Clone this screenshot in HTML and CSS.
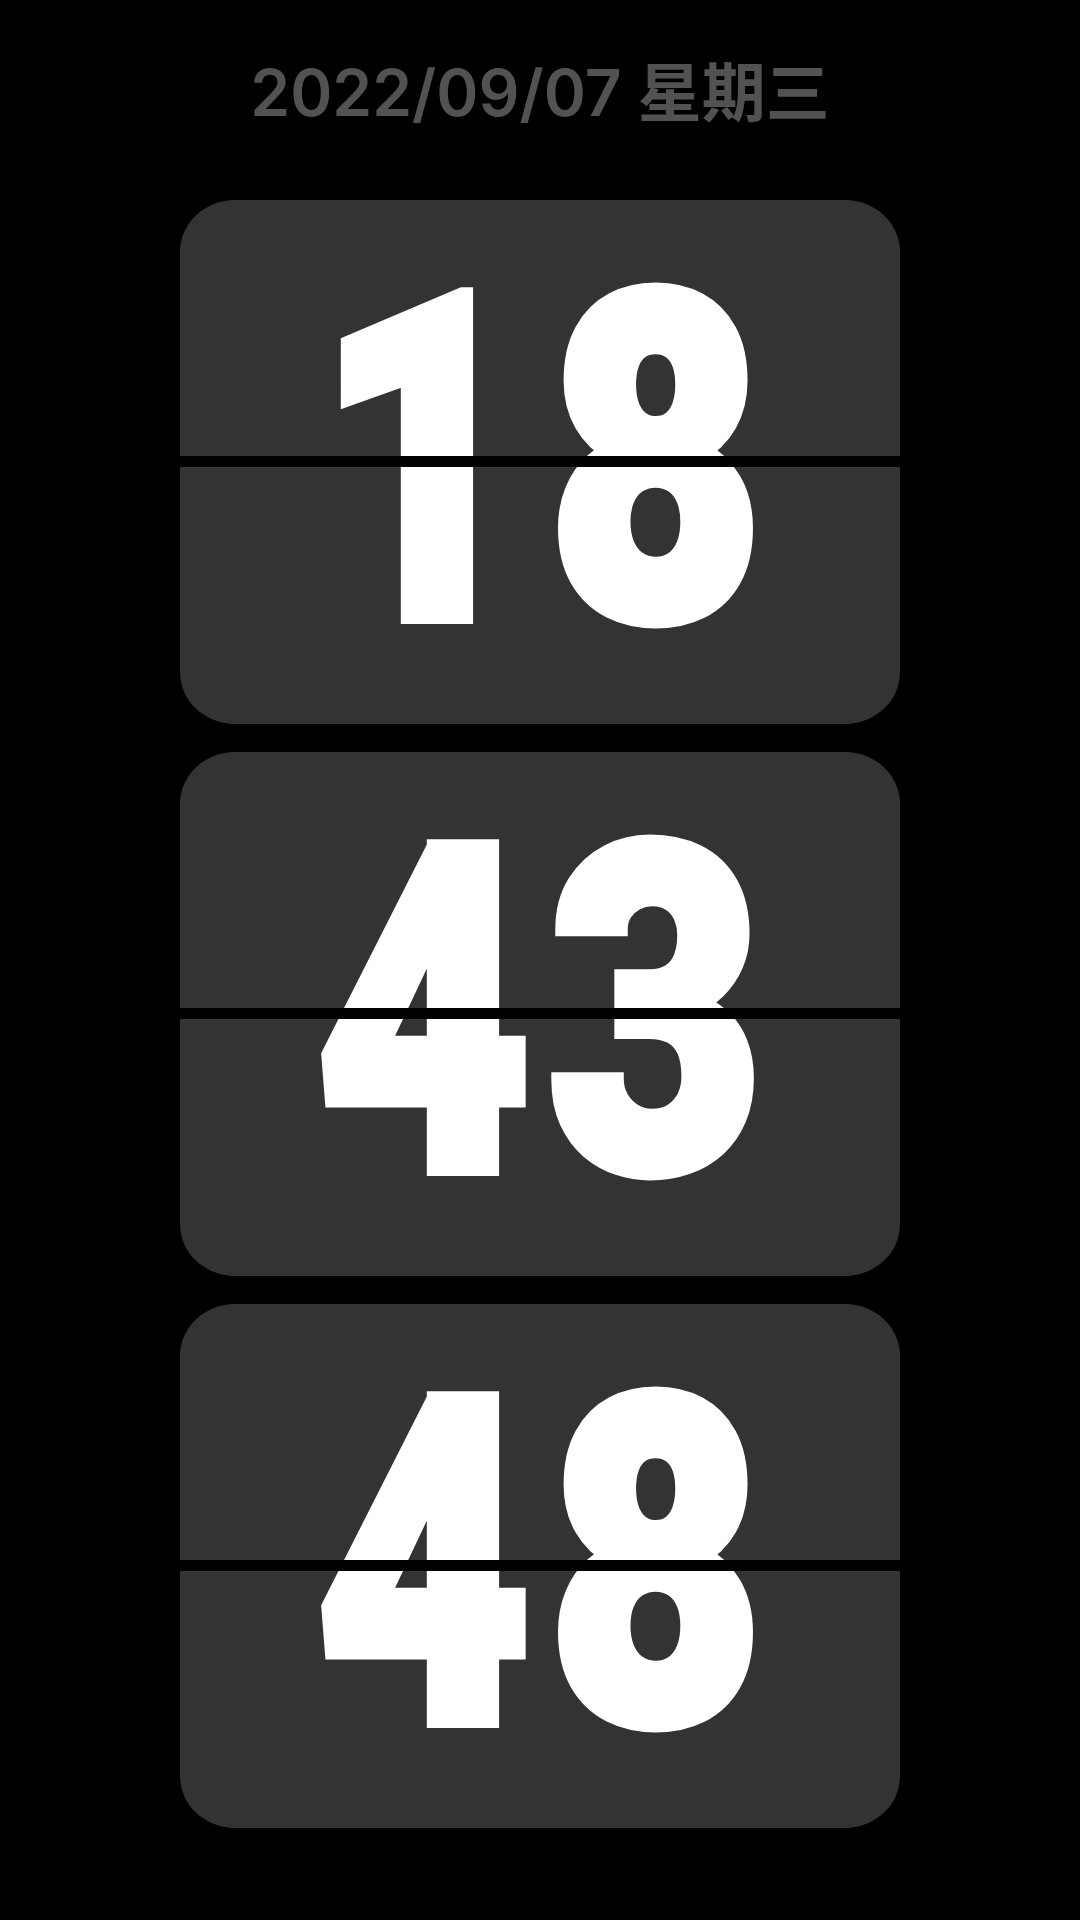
FILE: index.html
```html
<!DOCTYPE html>
<html lang="zh">
<head>
<meta charset="utf-8">
<title>Flip Clock</title>
<link rel="stylesheet" href="styles.css">
</head>
<body>
<div class="page">
  <div class="date">2022/09/07 星期三</div>
  <div class="cards">
    <div class="card">
      <div class="digits"><span class="d"><span class="g">1</span></span><span class="d"><span class="g">8</span></span></div>
      <div class="band"></div>
    </div>
    <div class="card">
      <div class="digits"><span class="d"><span class="g">4</span></span><span class="d"><span class="g">3</span></span></div>
      <div class="band"></div>
    </div>
    <div class="card">
      <div class="digits"><span class="d"><span class="g">4</span></span><span class="d"><span class="g">8</span></span></div>
      <div class="band"></div>
    </div>
  </div>
</div>
</body>
</html>
```
FILE: styles.css
```css
html, body {
  margin: 0;
  padding: 0;
  background: #000;
}
.page {
  width: 1080px;
  height: 1920px;
  background: #000;
  overflow: hidden;
}
.date {
  padding-top: 61px;
  height: 64px;
  line-height: 64px;
  margin-bottom: 75px;
  text-align: center;
  color: #525252;
  font-family: Inter, "Noto Sans CJK SC", sans-serif;
  font-weight: 600;
  font-size: 64px;
  white-space: nowrap;
}
.cards {
  display: flex;
  flex-direction: column;
  align-items: center;
  gap: 28px;
}
.card {
  position: relative;
  width: 720px;
  height: 524px;
  background: #333333;
  border-radius: 55px / 52px;
  display: flex;
  align-items: center;
  justify-content: center;
  overflow: hidden;
}
.digits {
  display: flex;
  justify-content: center;
  margin-left: 0;
}
.d {
  width: 260px;
  height: 454px;
  display: flex;
  justify-content: center;
}
.d + .d {
  margin-left: -28px;
}
.g {
  display: block;
  font-family: Roboto, sans-serif;
  font-weight: 900;
  font-size: 454px;
  line-height: 454px;
  height: 454px;
  color: #ffffff;
  transform: scaleX(0.815);
  -webkit-text-stroke: 14px #ffffff;
}
.band {
  position: absolute;
  left: 0;
  right: 0;
  top: 256px;
  height: 11px;
  background: #000;
}
```
